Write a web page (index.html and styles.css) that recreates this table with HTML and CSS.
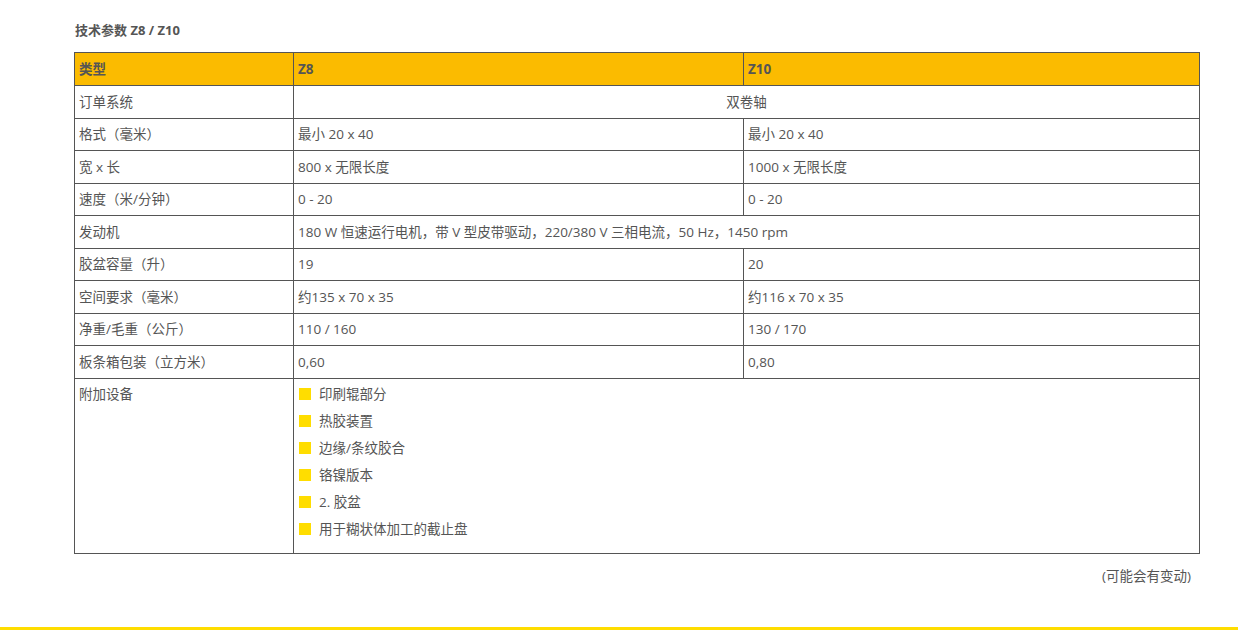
FILE: index.html
```html
<!DOCTYPE html>
<html lang="zh">
<head>
<meta charset="utf-8">
<link rel="stylesheet" href="styles.css">
</head>
<body>
<div class="page">
  <h3 class="title">技术参数 Z8 / Z10</h3>
  <table class="spec">
    <colgroup><col class="c1"><col class="c2"><col class="c3"></colgroup>
    <thead>
      <tr><th>类型</th><th>Z8</th><th>Z10</th></tr>
    </thead>
    <tbody>
      <tr><td>订单系统</td><td colspan="2" class="center">双卷轴</td></tr>
      <tr><td>格式（毫米）</td><td>最小 20 x 40</td><td>最小 20 x 40</td></tr>
      <tr><td>宽 x 长</td><td>800 x 无限长度</td><td>1000 x 无限长度</td></tr>
      <tr><td>速度（米/分钟）</td><td>0 - 20</td><td>0 - 20</td></tr>
      <tr><td>发动机</td><td colspan="2">180 W 恒速运行电机，带 V 型皮带驱动，220/380 V 三相电流，50 Hz，1450 rpm</td></tr>
      <tr><td>胶盆容量（升）</td><td>19</td><td>20</td></tr>
      <tr><td>空间要求（毫米）</td><td>约135 x 70 x 35</td><td>约116 x 70 x 35</td></tr>
      <tr><td>净重/毛重（公斤）</td><td>110 / 160</td><td>130 / 170</td></tr>
      <tr><td>板条箱包装（立方米）</td><td>0,60</td><td>0,80</td></tr>
      <tr class="tall"><td>附加设备</td><td colspan="2">
        <ul class="extras">
          <li>印刷辊部分</li>
          <li>热胶装置</li>
          <li>边缘/条纹胶合</li>
          <li>铬镍版本</li>
          <li>2. 胶盆</li>
          <li>用于糊状体加工的截止盘</li>
        </ul>
      </td></tr>
    </tbody>
  </table>
  <p class="note">(可能会有变动)</p>
</div>
<div class="rule"></div>
</body>
</html>
```
FILE: styles.css
```css
html, body { margin: 0; padding: 0; background: #fff; }
body {
  font-family: "Open Sans", "Noto Sans CJK SC", sans-serif;
  font-size: 13.5px;
  color: #555;
  height: 630px;
  display: flex;
  flex-direction: column;
}
.page {
  padding: 20px 39px 0 74px;
  flex: 1;
}
.title {
  margin: 0 0 12px 1px;
  font-size: 13px;
  font-weight: 700;
  line-height: 20px;
  color: #555;
}
.spec {
  width: 1125px;
  border-collapse: collapse;
  table-layout: fixed;
}
.c1 { width: 219px; }
.c2 { width: 450px; }
.c3 { width: 456px; }
.spec th, .spec td {
  border: 1px solid #555;
  padding: 0 4px;
  height: 31.5px;
  text-align: left;
  vertical-align: middle;
  line-height: 18px;
}
.spec th {
  background: #fbbb00;
  font-weight: 700;
  height: 32px;
}
.spec td.center { text-align: center; }
.tall td { vertical-align: top; height: 168px; padding-top: 6px; }
.extras { list-style: none; margin: 0; padding: 0; }
.extras li {
  display: flex;
  align-items: center;
  gap: 8px;
  height: 27px;
  margin-top: -4px;
  margin-bottom: 4px;
}
.extras li::before {
  content: "";
  width: 12px;
  height: 12px;
  background: #ffdd00;
  flex: none;
  margin-left: 1px;
}
.note {
  margin: 13px 8px 0 0;
  text-align: right;
  line-height: 18px;
}
.rule {
  height: 3px;
  background: #ffdd00;
  margin-bottom: 0;
}
```
